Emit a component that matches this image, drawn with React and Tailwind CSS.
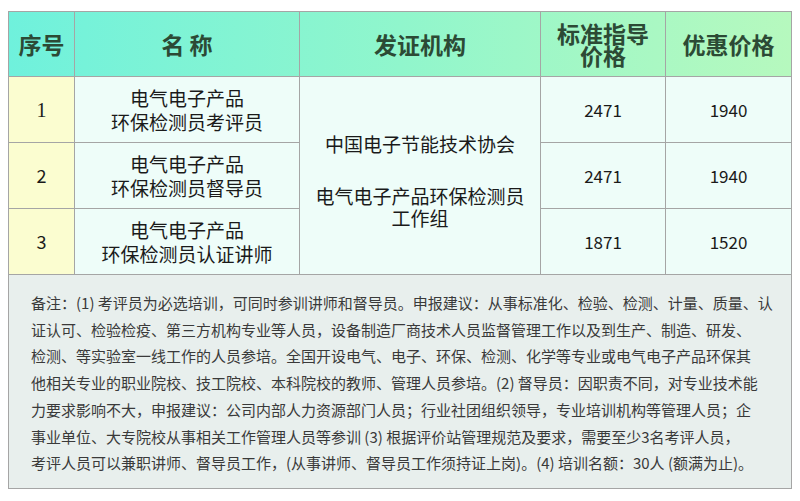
import React from "react";

const cjk = { fontFamily: '"Noto Sans CJK SC", "Noto Sans", sans-serif' };

const rows = [
  { no: "1", serif: true, name: ["电气电子产品", "环保检测员考评员"], std: "2471", sale: "1940" },
  { no: "2", name: ["电气电子产品", "环保检测员督导员"], std: "2471", sale: "1940" },
  { no: "3", name: ["电气电子产品", "环保检测员认证讲师"], std: "1871", sale: "1520" },
];

const noteLines = [
  "备注：(1) 考评员为必选培训，可同时参训讲师和督导员。申报建议：从事标准化、检验、检测、计量、质量、认",
  "证认可、检验检疫、第三方机构专业等人员，设备制造厂商技术人员监督管理工作以及到生产、制造、研发、",
  "检测、等实验室一线工作的人员参培。全国开设电气、电子、环保、检测、化学等专业或电气电子产品环保其",
  "他相关专业的职业院校、技工院校、本科院校的教师、管理人员参培。(2) 督导员：因职责不同，对专业技术能",
  "力要求影响不大，申报建议：公司内部人力资源部门人员；行业社团组织领导，专业培训机构等管理人员；企",
  "事业单位、大专院校从事相关工作管理人员等参训 (3) 根据评价站管理规范及要求，需要至少3名考评人员，",
  "考评人员可以兼职讲师、督导员工作，(从事讲师、督导员工作须持证上岗)。(4) 培训名额：30人 (额满为止)。",
];

export default function App() {
  return (
    <div className="w-[800px] h-[501px] bg-white pt-[11px] pl-2" style={cjk}>
      <div className="w-[784px] border border-[#a5a5a5]">
        {/* header */}
        <div className="grid grid-cols-[66px_225px_241px_125px_125px] h-[65px] border-b border-[#a5a5a5] bg-gradient-to-r from-[#6ff1dc] via-[#90f6cc] to-[#b6f9be] text-[#2c4a35] font-bold text-[23px]">
          <div className="flex items-center justify-center border-r border-[#a5a5a5]">序号</div>
          <div className="flex items-center justify-center border-r border-[#a5a5a5]">名 称</div>
          <div className="flex items-center justify-center border-r border-[#a5a5a5]">发证机构</div>
          <div className="flex flex-col items-center justify-center border-r border-[#a5a5a5] leading-[22px]">
            <span>标准指导</span>
            <span>价格</span>
          </div>
          <div className="flex items-center justify-center">优惠价格</div>
        </div>

        {/* body */}
        <div className="grid grid-cols-[66px_225px_241px_125px_125px] grid-rows-[66px_66px_66px] text-[19px] text-[#1a1a1a]">
          {rows.map((r, i) => (
            <React.Fragment key={r.no}>
              <div
                className="flex items-center justify-center bg-[#fbfdd0] border-r border-b border-[#a5a5a5]"
                style={{ gridColumn: 1, gridRow: i + 1 }}
              >
                <span
                  className={r.serif ? "text-[20px]" : "text-[18px]"}
                  style={r.serif ? { fontFamily: '"Liberation Serif", serif' } : undefined}
                >
                  {r.no}
                </span>
              </div>
              <div
                className="flex flex-col items-center justify-center bg-[#eefdf9] border-r border-b border-[#a5a5a5] leading-[24px]"
                style={{ gridColumn: 2, gridRow: i + 1 }}
              >
                {r.name.map((t) => (
                  <span key={t}>{t}</span>
                ))}
              </div>
              <div
                className="flex items-center justify-center bg-[#eefdf9] border-r border-b border-[#a5a5a5] text-[17px]"
                style={{ gridColumn: 4, gridRow: i + 1 }}
              >
                {r.std}
              </div>
              <div
                className="flex items-center justify-center bg-[#eefdf9] border-b border-[#a5a5a5] text-[17px]"
                style={{ gridColumn: 5, gridRow: i + 1 }}
              >
                {r.sale}
              </div>
            </React.Fragment>
          ))}
          <div className="col-start-3 row-start-1 row-span-3 flex flex-col items-center justify-center pt-[10px] bg-[#eefdf9] border-r border-b border-[#a5a5a5] leading-[22px] text-center">
            <div>中国电子节能技术协会</div>
            <div className="mt-[30px]">电气电子产品环保检测员</div>
            <div>工作组</div>
          </div>
        </div>

        {/* note */}
        <div className="bg-[#e8efed] pl-[22px] pt-[15px] h-[213px] text-[15px] leading-[26.7px] text-[#3a3a3a]">
          {noteLines.map((l) => (
            <div key={l} className="whitespace-nowrap">
              {l}
            </div>
          ))}
        </div>
      </div>
    </div>
  );
}
